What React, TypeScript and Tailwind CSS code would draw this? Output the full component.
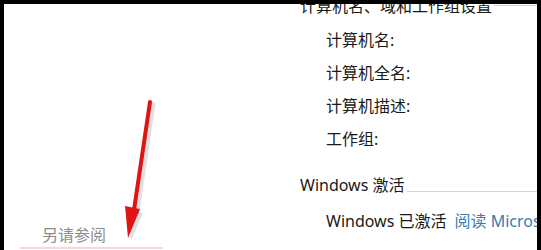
export default function App() {
  const font = { fontFamily: '"Noto Sans", "Noto Sans CJK SC", sans-serif' };
  return (
    <div className="w-[541px] h-[250px] bg-black overflow-hidden pl-[4px] pt-[4px] pr-[4px]" style={font}>
      <div className="relative flex h-[246px] bg-white overflow-hidden">
        {/* left column */}
        <div className="w-[296px] shrink-0 flex flex-col justify-end">
          <div className="pl-[38px] text-[16px] leading-[22px] text-[#8c8c8c]">另请参阅</div>
          <div className="ml-[16px] mt-[1px] mb-[1px] w-[143px] h-[2px] bg-[#f6d6d6]"></div>
        </div>

        {/* right column */}
        <div className="flex-1 flex flex-col text-[16px] text-[#1a1a1a]">
          <div className="flex items-start -mt-[9px] h-[22px]">
            <span className="leading-[22px] whitespace-nowrap">计算机名、域和工作组设置</span>
            <div className="flex-1 h-px bg-[#cfcfcf] mt-[10px] ml-[2px]"></div>
          </div>
          <div className="pl-[26px] mt-[7px] flex flex-col">
            <div className="h-[33px] leading-[33px]">计算机名:</div>
            <div className="h-[33px] leading-[33px]">计算机全名:</div>
            <div className="h-[33px] leading-[33px]">计算机描述:</div>
            <div className="h-[33px] leading-[33px]">工作组:</div>
          </div>
          <div className="flex items-start mt-[13px] h-[33px]">
            <span className="leading-[33px] whitespace-nowrap">Windows 激活</span>
            <div className="flex-1 h-px bg-[#d4d4d4] mt-[22px] ml-[2px]"></div>
          </div>
          <div className="pl-[26px] mt-[3px] h-[33px] leading-[33px] whitespace-nowrap">
            Windows 已激活
            <span className="ml-[8px] text-[#3a7cb0]">阅读 Microsoft</span>
          </div>
        </div>

        {/* annotation arrow */}
        <svg className="absolute left-0 top-0 pointer-events-none" width="300" height="246" viewBox="0 4 300 246">
          <line x1="149" y1="104" x2="133" y2="212" stroke="#000" strokeOpacity="0.12" strokeWidth="5" strokeLinecap="round" />
          <polygon points="124,210 139,213 127,241" fill="#000" fillOpacity="0.12" />
          <line x1="146" y1="102" x2="130" y2="210" stroke="#e01414" strokeWidth="4" strokeLinecap="round" />
          <polygon points="121,206 136,209 124,238" fill="#e01414" />
        </svg>
      </div>
    </div>
  );
}
